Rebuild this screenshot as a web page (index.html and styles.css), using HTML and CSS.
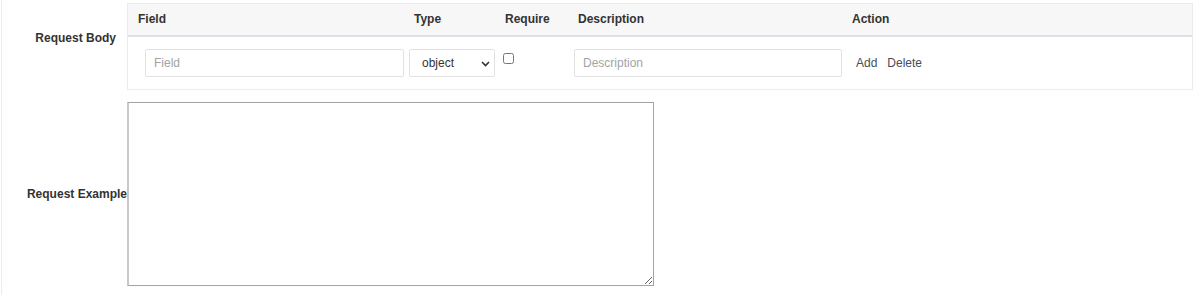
FILE: index.html
```html
<!DOCTYPE html>
<html lang="en">
<head>
<meta charset="UTF-8">
<title>API Edit</title>
<link rel="stylesheet" href="styles.css">
</head>
<body>
	<div class="page">
		<div class="form-row">
			<label class="form-label label-body">Request Body</label>
			<div class="param-table">
				<div class="cell head">Field</div>
				<div class="cell head">Type</div>
				<div class="cell head">Require</div>
				<div class="cell head">Description</div>
				<div class="cell head">Action</div>

				<div class="cell body c-field"><input type="text" class="txt" placeholder="Field"></div>
				<div class="cell body c-type">
					<div class="sel-wrap">
						<select class="sel">
							<option>object</option>
							<option>string</option>
							<option>number</option>
							<option>boolean</option>
							<option>array</option>
						</select>
						<svg class="sel-arrow" width="9" height="6" viewBox="0 0 9 6"><path d="M1 1 L4.5 4.5 L8 1" fill="none" stroke="#333" stroke-width="1.6"/></svg>
					</div>
				</div>
				<div class="cell body c-req"><input type="checkbox" class="chk"></div>
				<div class="cell body c-desc"><input type="text" class="txt" placeholder="Description"></div>
				<div class="cell body c-act"><a class="act">Add</a><a class="act">Delete</a></div>
			</div>
		</div>
		<div class="form-row row-example">
			<label class="form-label label-example">Request Example</label>
			<textarea class="example"></textarea>
		</div>
	</div>
</body>
</html>
```

FILE: styles.css
```css
body {
	margin: 0;
	padding: 0;
	font-family: "Liberation Sans", Arial, sans-serif;
	font-size: 12px;
	color: #333;
	background: #fff;
}
.page {
	margin-left: 1px;
	border-left: 1px solid #ececec;
	height: 295px;
	box-sizing: border-box;
	padding-top: 3px;
}
.form-row {
	display: flex;
	align-items: flex-start;
}
.form-label {
	width: 125px;
	flex: none;
	text-align: right;
	font-weight: bold;
	box-sizing: border-box;
}
.label-body {
	padding-top: 28px;
	padding-right: 11px;
}
.row-example {
	margin-top: 12px;
	align-items: center;
}
.label-example {
	padding-right: 0;
	white-space: nowrap;
}
.param-table {
	width: 1066px;
	display: grid;
	grid-template-columns: 276px 91px 73px 274px 1fr;
	border: 1px solid #ebebeb;
	border-bottom: 1px solid #ececec;
	box-sizing: border-box;
}
.cell.head {
	height: 31px;
	line-height: 31px;
	padding-left: 10px;
	font-weight: bold;
	background: #f7f7f7;
	border-bottom: 2px solid #dcdfe8;
}
.cell.body {
	height: 52px;
	box-sizing: border-box;
	padding-top: 12px;
}
.c-field {
	padding-left: 17px;
}
.c-type {
	padding-left: 5px;
}
.c-req {
	padding-left: 4px;
}
.c-desc {
	padding-left: 6px;
}
.c-act {
	padding-left: 14px;
	line-height: 28px;
}
.txt {
	width: 100%;
	height: 28px;
	box-sizing: border-box;
	border: 1px solid #e2e2e2;
	border-radius: 2px;
	padding: 0 8px;
	font-family: "Liberation Sans", Arial, sans-serif;
	font-size: 12px;
	color: #333;
	outline: 0;
}
.txt::placeholder {
	color: #a3a3a3;
}
.sel-wrap {
	position: relative;
}
.sel {
	-webkit-appearance: none;
	appearance: none;
	width: 100%;
	height: 28px;
	box-sizing: border-box;
	border: 1px solid #e2e2e2;
	border-radius: 2px;
	padding-left: 12px;
	font-family: "Liberation Sans", Arial, sans-serif;
	font-size: 12px;
	color: #333;
	background: #fff;
	outline: 0;
}
.sel-arrow {
	position: absolute;
	right: 5px;
	top: 12px;
	pointer-events: none;
}
.chk {
	margin: 4px 0 0 4px;
	width: 11px;
	height: 11px;
}
.act {
	color: #4a4d55;
	cursor: pointer;
	margin-right: 10px;
}
.example {
	width: 527px;
	height: 184px;
	box-sizing: border-box;
	border: 1px solid #a3a3a3;
	border-left: 2px solid #c8c8c8;
	margin: 0;
	padding: 2px;
	font-family: "Liberation Mono", monospace;
	font-size: 13px;
}
```
